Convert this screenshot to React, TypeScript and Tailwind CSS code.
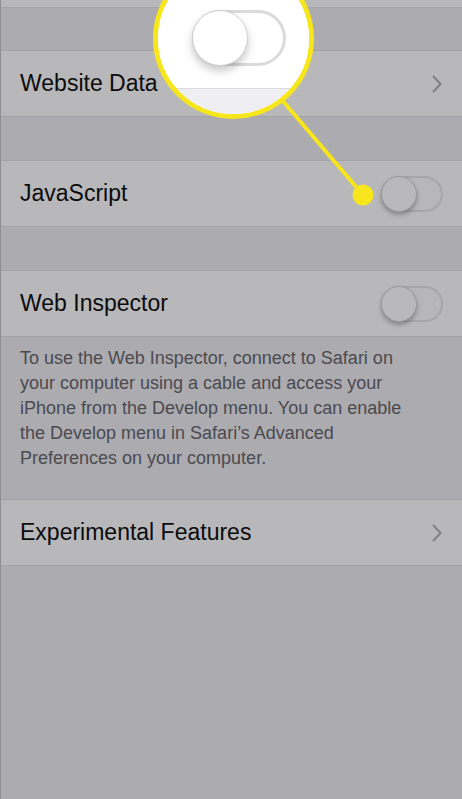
import React from "react";

const Chevron = () => (
  <svg width="10" height="18" viewBox="0 0 10 18" className="shrink-0">
    <path d="M1.5 1.5 L8.5 9 L1.5 16.5" fill="none" stroke="#808084" strokeWidth="2" strokeLinecap="round" strokeLinejoin="round" />
  </svg>
);

const Toggle = () => (
  <div className="relative w-[62px] h-[36px] rounded-full border-2 border-[#a6a6a9] bg-[#b7b7b9]">
    <div className="absolute left-[-2px] top-[-2px] w-[36px] h-[36px] rounded-full bg-[#b9b9bb] border border-[#9a9a9d] shadow-[0_3px_4px_rgba(0,0,0,0.25)]" />
  </div>
);

const Row = ({ label, right }: { label: string; right?: React.ReactNode }) => (
  <div className="flex items-center justify-between h-[67px] bg-[#b8b8ba] border-y border-[#a3a3a7] pl-[19px] pr-[19px]">
    <span className="text-[23px] text-[#0b0b0c]">{label}</span>
    {right}
  </div>
);

export default function App() {
  return (
    <div
      className="relative w-[462px] h-[799px] overflow-hidden bg-[#acabb0] border-l border-[#8e8e91]"
      style={{ fontFamily: '"Liberation Sans", Arial, sans-serif' }}
    >
      <div className="h-[8px] bg-[#b8b8ba] border-b border-[#a3a3a7]" />
      <div className="h-[42px]" />
      <Row label="Website Data" right={<div className="pr-[1px]"><Chevron /></div>} />
      <div className="h-[43px]" />
      <Row label="JavaScript" right={<Toggle />} />
      <div className="h-[43px]" />
      <Row label="Web Inspector" right={<Toggle />} />
      <div className="h-[162px] pl-[19px] pr-[20px] pt-[9px] text-[18px] leading-[25px] text-[#4a4a4f]">
        <span className="block">To use the Web Inspector, connect to Safari on</span>
        <span className="block">your computer using a cable and access your</span>
        <span className="block">iPhone from the Develop menu. You can enable</span>
        <span className="block">the Develop menu in Safari’s Advanced</span>
        <span className="block">Preferences on your computer.</span>
      </div>
      <Row label="Experimental Features" right={<div className="pr-[1px]"><Chevron /></div>} />

      {/* callout: line and dot */}
      <svg className="absolute left-0 top-0 pointer-events-none" width="462" height="230">
        <line x1="281" y1="100" x2="362" y2="195" stroke="#f7e61c" strokeWidth="4" strokeLinecap="round" />
        <circle cx="362" cy="195" r="10.5" fill="#f7e61c" />
      </svg>

      {/* magnifier */}
      <div className="absolute left-[152px] top-[-42px] w-[161px] h-[161px] rounded-full border-[5px] border-[#f7e61c] overflow-hidden bg-white">
        <div className="flex flex-col h-full">
          <div className="h-[126px] bg-white border-b border-[#dcdce0] flex justify-center pt-[47px]">
            <div className="relative w-[94px] h-[56px] rounded-full border-[3px] border-[#dadada] bg-white ml-[10px]">
              <div className="absolute left-[-3px] top-[-3px] w-[56px] h-[56px] rounded-full bg-white border border-[#cfcfcf] shadow-[0_5px_8px_rgba(0,0,0,0.22)]" />
            </div>
          </div>
          <div className="flex-1 bg-[#efeff3]" />
        </div>
      </div>
    </div>
  );
}
